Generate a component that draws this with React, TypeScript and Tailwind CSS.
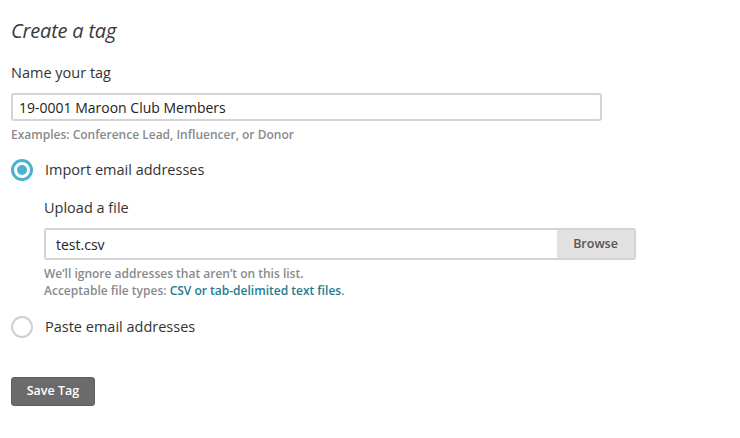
import React from "react";

export default function App() {
  const font = { fontFamily: '"Open Sans", "Noto Sans", sans-serif' };
  return (
    <div className="w-[740px] h-[438px] bg-white text-[#333333] pl-[11px] pt-[18px]" style={font}>
      <h1 className="text-[20px] italic leading-[26px] text-[#3a3a3a] tracking-[-0.2px]">Create a tag</h1>

      <div className="mt-[19px] text-[14.5px] leading-[20px] text-[#333]">Name your tag</div>
      <div className="mt-[10px] w-[591px] h-[28px] border-2 border-[#d4d4d4] rounded-[3px] flex items-center pl-[6px] text-[14px] text-[#222]">
        19-0001 Maroon Club Members
      </div>
      <div className="mt-[5px] text-[12px] leading-[17px] font-semibold text-[#8a8a8a]">
        Examples: Conference Lead, Influencer, or Donor
      </div>

      <div className="mt-[16px] flex items-center gap-[12px]">
        <div className="w-[22px] h-[22px] rounded-full border-[3px] border-[#4ab1cf] flex items-center justify-center">
          <div className="w-[10px] h-[10px] rounded-full bg-[#4ab1cf]" />
        </div>
        <div className="text-[14.5px] leading-[20px] text-[#333]">Import email addresses</div>
      </div>

      <div className="ml-[33px]">
        <div className="mt-[17px] text-[14.5px] leading-[20px] text-[#333]">Upload a file</div>
        <div className="mt-[10px] w-[592px] h-[32px] border-2 border-[#d4d4d4] rounded-[3px] flex overflow-hidden">
          <div className="flex-1 flex items-center pl-[10px] text-[14px] text-[#222]">test.csv</div>
          <div className="w-[77px] bg-[#e1e1e1] flex items-center justify-center text-[12.5px] font-semibold text-[#555]">
            Browse
          </div>
        </div>
        <div className="mt-[5px] text-[12px] leading-[17px] font-semibold text-[#8a8a8a]">
          We’ll ignore addresses that aren’t on this list.
        </div>
        <div className="text-[12px] leading-[17px] font-semibold text-[#8a8a8a]">
          Acceptable file types: <span className="text-[#227c90]">CSV or tab-delimited text files</span>.
        </div>
      </div>

      <div className="mt-[17px] flex items-center gap-[12px]">
        <div className="w-[22px] h-[22px] rounded-full border-2 border-[#cfcfcf]" />
        <div className="text-[14.5px] leading-[20px] text-[#333]">Paste email addresses</div>
      </div>

      <button className="mt-[39px] w-[84px] h-[29px] bg-[#6b6b6b] rounded-[3px] text-white text-[12.5px] font-semibold flex items-center justify-center border border-[#5e5e5e]">
        Save Tag
      </button>
    </div>
  );
}
